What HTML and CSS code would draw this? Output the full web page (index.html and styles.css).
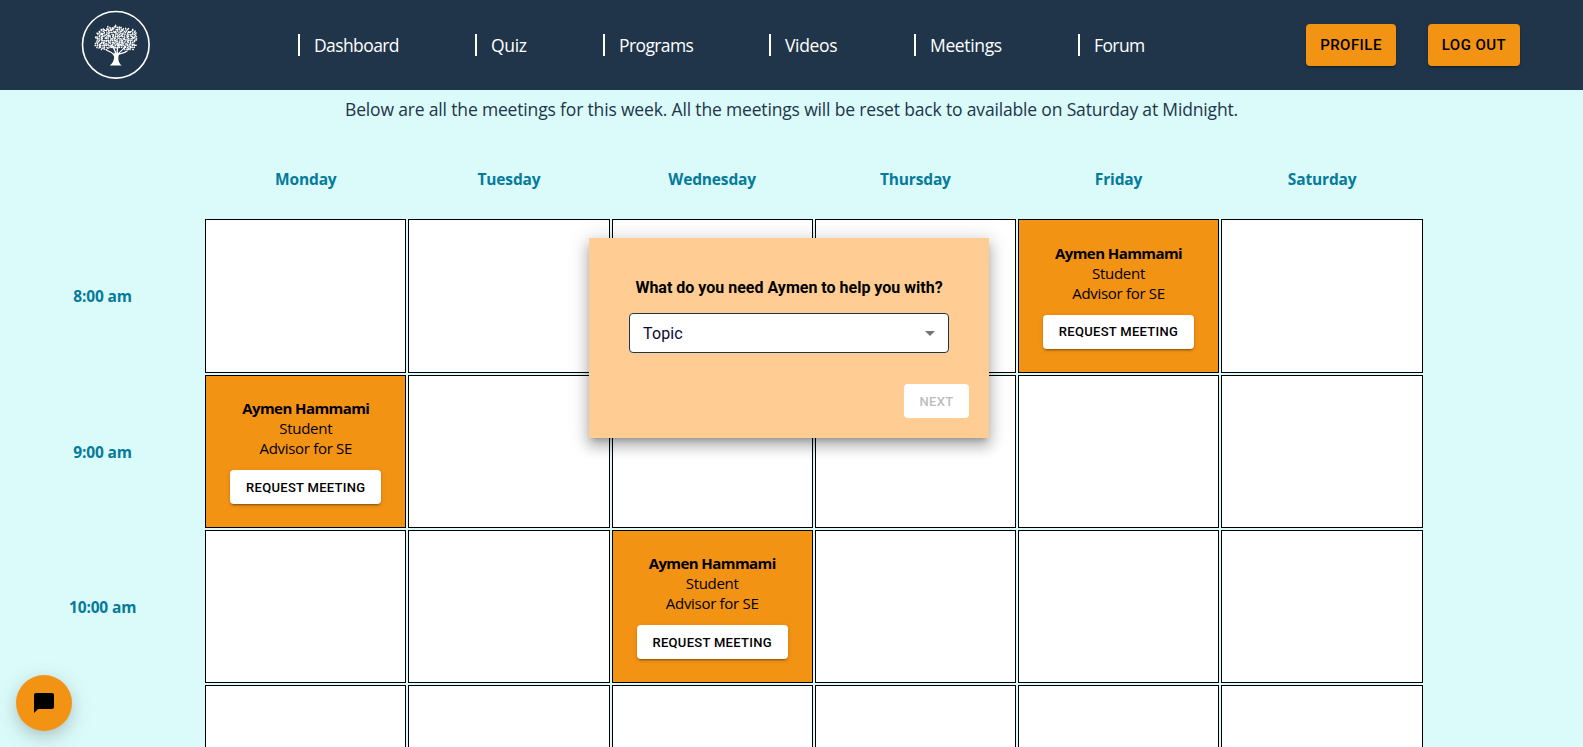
FILE: index.html
```html
<!DOCTYPE html>
<html lang="en">
<head>
<meta charset="utf-8">
<title>Meetings</title>
<link rel="stylesheet" href="styles.css">
</head>
<body>
<header class="navbar">
  <svg class="logo" viewBox="0 0 70 70" aria-label="Tree logo">
    <circle cx="34.800" cy="34.800" r="33.3" fill="none" stroke="#fff" stroke-width="1.6"/>
    <g id="leaves" fill="#fff"></g>
    <g fill="none" stroke="#fff" stroke-linecap="round">
      <path d="M33.5 46C32 43 29.500 41.500 26 40.500M35 45C34.500 41 33 38 30 35M36 44C36 40 37 36 38 33" stroke-width="1.300"/>
      <path d="M36.500 45C38 42 42 40 45 36M37 44.500C40 43 43 43.500 46 41" stroke-width="1.200"/>
    </g>
    <path d="M32.200 42.500C34 46 33.500 52 28.800 55.500H40.800C37 53 36.500 47 38.500 43.500L36 42.500L35 44Z" fill="#fff"/>
  </svg>
  <nav class="menu">
    <a class="link dashboard">Dashboard</a>
    <a class="link quiz">Quiz</a>
    <a class="link programs">Programs</a>
    <a class="link videos">Videos</a>
    <a class="link meetings">Meetings</a>
    <a class="link forum">Forum</a>
  </nav>
  <div class="account">
    <button class="btn nav-btn profile">PROFILE</button>
    <button class="btn nav-btn logout">LOG OUT</button>
  </div>
</header>
<main>
  <p class="intro">Below are all the meetings for this week. All the meetings will be reset back to available on Saturday at Midnight.</p>
  <section class="schedule">
    <div></div>
    <div class="label day">Monday</div><div class="label day">Tuesday</div><div class="label day">Wednesday</div><div class="label day">Thursday</div><div class="label day">Friday</div><div class="label day">Saturday</div>

    <div class="label">8:00 am</div>
    <div class="slot"></div><div class="slot"></div><div class="slot"></div><div class="slot"></div>
    <div class="slot open"><strong>Aymen Hammami</strong><span>Student</span><span>Advisor for SE</span><button class="btn request">REQUEST MEETING</button></div>
    <div class="slot"></div>

    <div class="label">9:00 am</div>
    <div class="slot open"><strong>Aymen Hammami</strong><span>Student</span><span>Advisor for SE</span><button class="btn request">REQUEST MEETING</button></div>
    <div class="slot"></div><div class="slot"></div><div class="slot"></div><div class="slot"></div><div class="slot"></div>

    <div class="label">10:00 am</div>
    <div class="slot"></div><div class="slot"></div>
    <div class="slot open"><strong>Aymen Hammami</strong><span>Student</span><span>Advisor for SE</span><button class="btn request">REQUEST MEETING</button></div>
    <div class="slot"></div><div class="slot"></div><div class="slot"></div>

    <div></div>
    <div class="slot"></div><div class="slot"></div><div class="slot"></div><div class="slot"></div><div class="slot"></div><div class="slot"></div>
  </section>
</main>
<div class="dialog" role="dialog">
  <h2 class="question">What do you need Aymen to help you with?</h2>
  <div class="select"><span>Topic</span><svg width="24" height="24" viewBox="0 0 24 24"><path d="M7 10l5 5 5-5z" fill="#757575"/></svg></div>
  <button class="btn next" disabled>NEXT</button>
</div>
<button class="chat" aria-label="Chat"><svg width="24" height="24" viewBox="0 0 24 24"><path d="M20 2H4c-1.100 0-2 .9-2 2v18l4-4h14c1.100 0 2-.9 2-2V4c0-1.100-.9-2-2-2z"/></svg></button>
<script src="leaves.js"></script>
</body>
</html>
```
FILE: styles.css
```css
* { box-sizing: border-box; }
body {
  margin: 0;
  height: 747px;
  overflow: hidden;
  position: relative;
  background: #dbfafa;
  font-family: "Open Sans", "Noto Sans", sans-serif;
}
main { height: 657px; overflow: hidden; }
.navbar {
  display: flex;
  align-items: center;
  height: 90px;
  background: #21354a;
}
.logo { width: 70px; height: 70px; margin-left: 81px; flex: none; }
.menu { display: flex; margin-left: 147px; width: 1008px; flex: none; }
.link {
  flex: none;
  height: 22px;
  padding-left: 14px;
  border-left: 2px solid #fff;
  color: #fff;
  font-size: 17.5px;
  line-height: 23px;
  letter-spacing: -0.6px;
  white-space: nowrap;
}
.dashboard { width: 177px; }
.quiz { width: 128px; letter-spacing: -0.3px; }
.programs { width: 166px; }
.videos { width: 145px; letter-spacing: -0.35px; }
.meetings { width: 164px; letter-spacing: -0.35px; }
.account { display: flex; gap: 32px; }
.btn {
  padding: 0;
  border: 0;
  border-radius: 4px;
  color: #000;
  font-family: Roboto, sans-serif;
  font-weight: 500;
  white-space: nowrap;
  box-shadow: 0 3px 1px -2px rgba(0,0,0,.2), 0 2px 2px rgba(0,0,0,.14), 0 1px 5px rgba(0,0,0,.12);
}
.nav-btn { height: 42px; background: #f39314; font-size: 15px; letter-spacing: .46px; }
.profile { width: 90px; }
.logout { width: 92px; }
.intro {
  margin: 0;
  height: 61px;
  padding-top: 7px;
  color: #21354a;
  font-size: 17.5px;
  line-height: 25px;
  letter-spacing: -0.165px;
  text-align: center;
  white-space: nowrap;
}
.schedule {
  display: grid;
  grid-template-columns: repeat(6, 201.2px) 202px;
  grid-template-rows: 66px 154px 153px 153px 154px;
  gap: 2px;
  margin-left: 2px;
}
.label {
  display: flex;
  align-items: center;
  justify-content: center;
  color: #057b9b;
  font-size: 15.5px;
  font-weight: 700;
  letter-spacing: -0.15px;
}
.day { padding-bottom: 11px; }
.slot { border: 1px solid #000; background: #fff; }
.open {
  display: flex;
  flex-direction: column;
  align-items: center;
  justify-content: center;
  padding-bottom: .4px;
  background: #f39314;
  color: #000;
  font-size: 15px;
  line-height: 20px;
  letter-spacing: -0.3px;
}
.open strong { letter-spacing: -0.58px; }
.request { width: 151px; height: 34px; margin-top: 12px; background: #fff; font-size: 13px; letter-spacing: .3px; }
.dialog {
  position: absolute;
  left: 589px;
  top: 238px;
  width: 400px;
  height: 200px;
  padding: 40px 20px 20px;
  display: flex;
  flex-direction: column;
  align-items: center;
  background: #ffcd93;
  font-family: Roboto, sans-serif;
  box-shadow: 0 5px 5px -3px rgba(0,0,0,.2), 0 8px 12px 1px rgba(0,0,0,.2), 0 3px 18px 3px rgba(0,0,0,.14);
}
.question { margin: 0; font-size: 16px; font-weight: 700; line-height: 19px; white-space: nowrap; }
.select {
  display: flex;
  align-items: center;
  justify-content: space-between;
  width: 320px;
  height: 40px;
  margin-top: 16px;
  padding: 0 6px 0 13px;
  border: 1px solid #21354a;
  border-radius: 4px;
  background: #fff;
  color: #0a0a32;
  font-size: 16px;
  letter-spacing: .15px;
}
.next { align-self: flex-end; width: 65px; height: 34px; margin-top: 31px; background: #fff; color: #bdbdbd; font-size: 13px; letter-spacing: .3px; box-shadow: none; }
.chat {
  position: absolute;
  left: 16px;
  top: 675px;
  width: 56px;
  height: 56px;
  padding: 0;
  display: grid;
  place-items: center;
  border: 0;
  border-radius: 50%;
  background: #f39314;
  box-shadow: 0 3px 5px -1px rgba(0,0,0,.03), 0 6px 14px rgba(0,0,0,.08), 0 6px 24px rgba(0,0,0,.14);
}
```
FILE: leaves.js
```js
// Scatter small leaves over the crown of the logo tree.
const crown = document.getElementById("leaves");
const lobes = [[22.5, 27, 8.5, 8], [33, 23, 11.5, 8], [46, 27, 10.5, 9], [34, 30, 12, 8], [23, 34, 9, 6], [47, 35, 8.5, 5.5]];
let seed = 11;
const rnd = () => (seed = (seed * 16807) % 2147483647) / 2147483647;
for (let y = 13; y < 42; y += 1.85) {
  for (let x = 12; x < 59; x += 1.85) {
    const px = x + rnd() * 1.3, py = y + rnd() * 1.3;
    const inside = lobes.some(([a, b, r, s]) => ((px - a) / r) ** 2 + ((py - b) / s) ** 2 < 1);
    if (!inside) continue;
    const leaf = document.createElementNS("http://www.w3.org/2000/svg", "ellipse");
    leaf.setAttribute("cx", px);
    leaf.setAttribute("cy", py);
    leaf.setAttribute("rx", 1.05);
    leaf.setAttribute("ry", 0.75);
    leaf.setAttribute("transform", `rotate(${rnd() * 180} ${px} ${py})`);
    crown.append(leaf);
  }
}
```
